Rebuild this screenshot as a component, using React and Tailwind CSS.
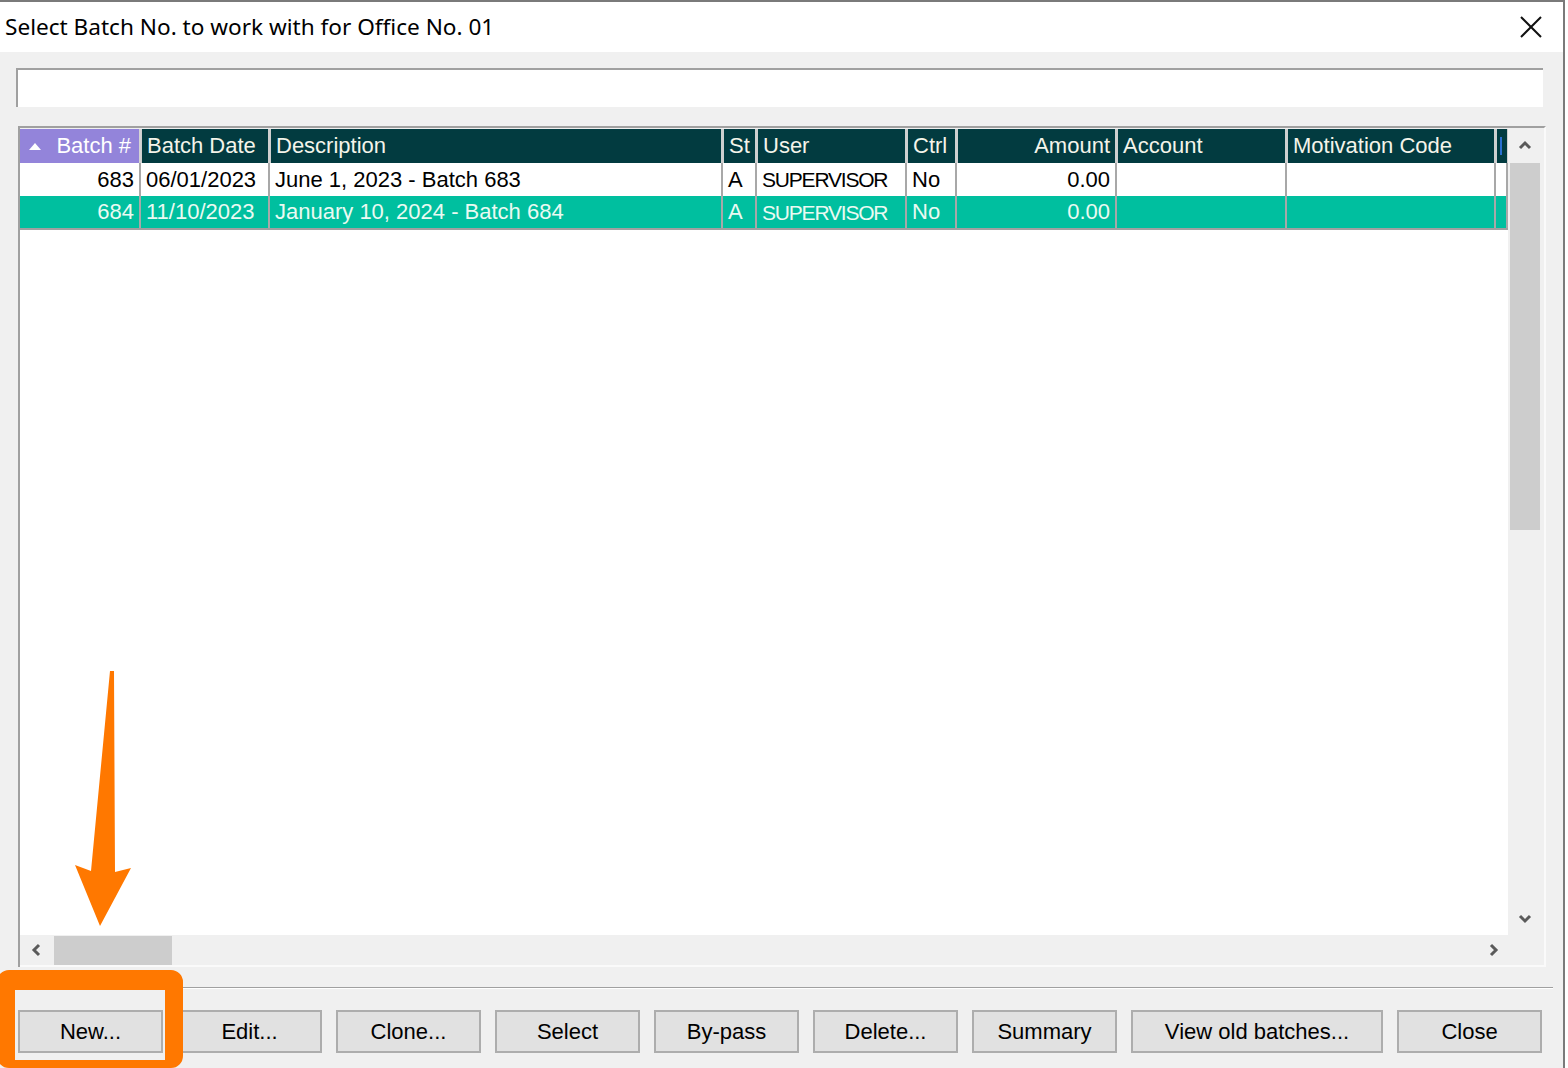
import React from 'react';

const columns = [
  { key: 'batch', label: 'Batch #', align: 'right' },
  { key: 'date', label: 'Batch Date' },
  { key: 'desc', label: 'Description' },
  { key: 'st', label: 'St' },
  { key: 'user', label: 'User' },
  { key: 'ctrl', label: 'Ctrl' },
  { key: 'amount', label: 'Amount', align: 'right' },
  { key: 'account', label: 'Account' },
  { key: 'motivation', label: 'Motivation Code' },
  { key: 'extra', label: '' },
];

const rows = [
  { batch: '683', date: '06/01/2023', desc: 'June 1, 2023 - Batch 683', st: 'A', user: 'SUPERVISOR', ctrl: 'No', amount: '0.00', account: '', motivation: '', extra: '' },
  { batch: '684', date: '11/10/2023', desc: 'January 10, 2024 - Batch 684', st: 'A', user: 'SUPERVISOR', ctrl: 'No', amount: '0.00', account: '', motivation: '', extra: '', selected: true },
];

const buttons = ['New...', 'Edit...', 'Clone...', 'Select', 'By-pass', 'Delete...', 'Summary', 'View old batches...', 'Close'];

const gridCols = 'grid grid-cols-[121px_129px_453px_34px_150px_50px_160px_170px_209px_11px]';

function Chevron({ dir }) {
  // small win10 scrollbar arrows
  const paths = {
    up: 'M2 9 L7 4 L12 9',
    down: 'M2 5 L7 10 L12 5',
    left: 'M9 2 L4 7 L9 12',
    right: 'M5 2 L10 7 L5 12',
  };
  return (
    <svg width="14" height="14" viewBox="0 0 14 14">
      <path d={paths[dir]} fill="none" stroke="#5a5a5a" strokeWidth="3" />
    </svg>
  );
}

export default function App() {
  return (
    <div className="relative w-[1568px] h-[1068px] overflow-hidden bg-white" style={{ fontFamily: '"Liberation Sans", Arial, sans-serif' }}>
      <div className="w-[1565px] h-full flex flex-col border-t-2 border-r-2 border-[#7a7a7a]">

        {/* TITLE BAR */}
        <div className="h-[50px] shrink-0 bg-white flex items-center justify-between pl-[5px] pr-[20px]">
          <span className="text-[22.6px] text-black" style={{ fontFamily: '"Noto Sans", "Open Sans", sans-serif' }}>
            Select Batch No. to work with for Office No. 01
          </span>
          <svg width="24" height="24" viewBox="0 0 24 24">
            <path d="M2 2 L22 22 M22 2 L2 22" stroke="#111" strokeWidth="2" />
          </svg>
        </div>

        {/* BODY */}
        <div className="flex-1 bg-[#f0f0f0] flex flex-col">
          {/* Filter input */}
          <div className="mt-[16px] ml-[16px] w-[1527px] h-[39px] bg-white border-t-2 border-l-2 border-[#a0a0a0]" />

          {/* Grid */}
          <div className="mt-[19px] ml-[18px] w-[1528px] h-[841px] border-t-2 border-l-2 border-[#a0a0a0] border-r-2 border-r-[#fafafa] pt-[1px] flex flex-col">
            <div className="flex flex-1 min-h-0">
              <div className="w-[1488px] bg-white text-[22px] leading-none">
                {/* header */}
                <div className={`${gridCols} h-[34px]`}>
                  {columns.map((c, i) => (
                    <div
                      key={c.key}
                      className={
                        i === 0
                          ? 'bg-[#9384da] text-white flex items-center justify-between pl-[8px] pr-[8px] border-r-2 border-[#d4d4d4]'
                          : `bg-[#023b40] text-[#f4f4ea] flex items-center px-[5px] border-r-2 border-l border-[#cfcfcf] ${c.align === 'right' ? 'justify-end' : ''}`
                      }
                    >
                      {i === 0 && (
                        <svg width="14" height="10" viewBox="0 0 14 10"><path d="M1 9 L7 2 L13 9 Z" fill="#fff" /></svg>
                      )}
                      {c.key === 'extra' ? <div className="w-[2px] h-[18px] bg-[#2a6fd0] -ml-[2px]" /> : c.label}
                    </div>
                  ))}
                </div>
                {/* rows */}
                {rows.map((r, ri) => (
                  <div
                    key={ri}
                    className={`${gridCols} ${ri === 0 ? 'h-[33px]' : 'h-[34px] border-b-2 border-[#a0a0a0]'} ${r.selected ? 'bg-[#00bf9f] text-[#eafaf2]' : 'bg-white text-black'}`}
                  >
                    {columns.map((c) => (
                      <div
                        key={c.key}
                        className={`flex items-center px-[5px] border-r-2 border-[#a8a8a8] ${c.align === 'right' ? 'justify-end' : ''} ${c.key === 'user' ? 'text-[21px] tracking-[-1.2px]' : ''}`}
                      >
                        {r[c.key]}
                      </div>
                    ))}
                  </div>
                ))}
              </div>

              {/* vertical scrollbar */}
              <div className="w-[34px] bg-[#f0f0f0] flex flex-col items-center">
                <div className="h-[34px] flex items-center justify-center"><Chevron dir="up" /></div>
                <div className="w-[30px] h-[367px] bg-[#cdcdcd]" />
                <div className="flex-1" />
                <div className="h-[34px] flex items-center justify-center"><Chevron dir="down" /></div>
              </div>
            </div>

            {/* horizontal scrollbar */}
            <div className="h-[32px] flex bg-[#f0f0f0] border-b-2 border-[#fafafa]">
              <div className="w-[34px] flex items-center justify-center"><Chevron dir="left" /></div>
              <div className="w-[118px] h-[29px] mt-[1px] bg-[#cdcdcd]" />
              <div className="flex-1" />
              <div className="w-[34px] flex items-center justify-center"><Chevron dir="right" /></div>
              <div className="w-[34px]" />
            </div>
          </div>

          {/* separator */}
          <div className="mt-[20px] w-[1553px] h-[2px] border-t border-[#a0a0a0] border-b border-b-white" />

          {/* Buttons */}
          <div className="mt-[21px] ml-[18px] flex gap-[14px]">
            {buttons.map((b) => (
              <div
                key={b}
                className={`${b === 'View old batches...' ? 'w-[252px]' : 'w-[145px]'} h-[43px] bg-[#e1e1e1] border-2 border-[#adadad] flex items-center justify-center text-[22px] text-black`}
              >
                {b}
              </div>
            ))}
          </div>
        </div>
      </div>

      {/* annotation: orange highlight box + arrow */}
      <div className="absolute left-[-3px] top-[970px] w-[186px] h-[98px] rounded-[12px] border-t-[20px] border-l-[18px] border-r-[18px] border-b-[8px] border-[#ff7800]" />
      <svg className="absolute left-0 top-0" width="200" height="1000" viewBox="0 0 200 1000">
        <path d="M110 671 L114 671 L115 872 L131 868 L100 926 L75 865 L91 871 Z" fill="#ff7800" strokeLinejoin="round" />
      </svg>
    </div>
  );
}
